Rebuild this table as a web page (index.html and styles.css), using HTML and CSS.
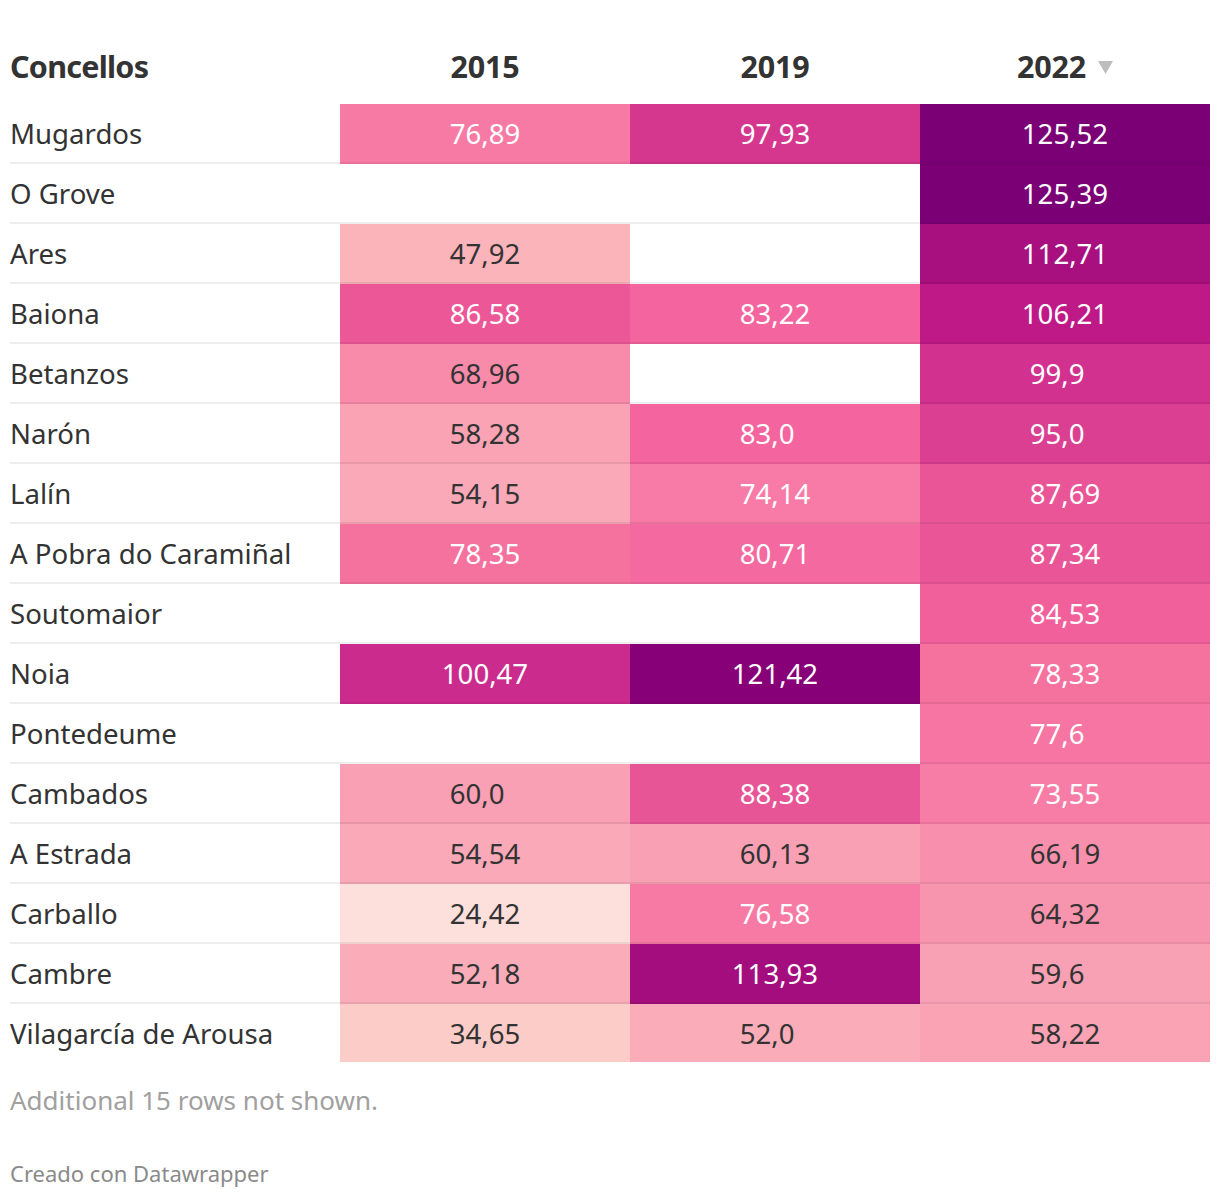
FILE: index.html
```html
<!DOCTYPE html>
<html lang="gl">
<head>
<meta charset="utf-8">
<title>Concellos</title>
<link rel="stylesheet" href="styles.css">
</head>
<body>
<div class="chart">
  <div class="table">
    <div class="th th-name">Concellos</div>
    <div class="th">2015</div>
    <div class="th">2019</div>
    <div class="th th-sorted">2022 <svg class="sort" width="15" height="13" viewBox="0 0 15 13"><polygon points="0,0 15,0 7.5,13" fill="#bdbdbd"/></svg></div>

    <div class="td name">Mugardos</div>
    <div class="td num light" style="background:#f77aa5">76,89</div>
    <div class="td num light" style="background:#d5378f">97,93</div>
    <div class="td num light" style="background:#7b0075">125,52</div>

    <div class="td name">O Grove</div>
    <div class="td num"></div>
    <div class="td num"></div>
    <div class="td num light" style="background:#7b0075">125,39</div>

    <div class="td name">Ares</div>
    <div class="td num" style="background:#fcb4bb">47,92</div>
    <div class="td num"></div>
    <div class="td num light" style="background:#a8107f">112,71</div>

    <div class="td name">Baiona</div>
    <div class="td num light" style="background:#ec5897">86,58</div>
    <div class="td num light" style="background:#f4649e">83,22</div>
    <div class="td num light" style="background:#bf1987">106,21</div>

    <div class="td name">Betanzos</div>
    <div class="td num" style="background:#f88aaa">68,96</div>
    <div class="td num"></div>
    <div class="td num light" style="background:#d2318f">99,9<span class="pad">0</span></div>

    <div class="td name">Narón</div>
    <div class="td num" style="background:#f9a3b5">58,28</div>
    <div class="td num light" style="background:#f4649e">83,0<span class="pad">0</span></div>
    <div class="td num light" style="background:#da3f92">95,0<span class="pad">0</span></div>

    <div class="td name">Lalín</div>
    <div class="td num" style="background:#faa9b8">54,15</div>
    <div class="td num light" style="background:#f77ba6">74,14</div>
    <div class="td num light" style="background:#e95597">87,69</div>

    <div class="td name">A Pobra do Caramiñal</div>
    <div class="td num light" style="background:#f5729f">78,35</div>
    <div class="td num light" style="background:#f4699f">80,71</div>
    <div class="td num light" style="background:#e95597">87,34</div>

    <div class="td name">Soutomaior</div>
    <div class="td num"></div>
    <div class="td num"></div>
    <div class="td num light" style="background:#f2609c">84,53</div>

    <div class="td name">Noia</div>
    <div class="td num light" style="background:#cc2b8e">100,47</div>
    <div class="td num light" style="background:#880077">121,42</div>
    <div class="td num light" style="background:#f5729f">78,33</div>

    <div class="td name">Pontedeume</div>
    <div class="td num"></div>
    <div class="td num"></div>
    <div class="td num light" style="background:#f675a2">77,6<span class="pad">0</span></div>

    <div class="td name">Cambados</div>
    <div class="td num" style="background:#f9a0b4">60,0<span class="pad">0</span></div>
    <div class="td num light" style="background:#e85597">88,38</div>
    <div class="td num light" style="background:#f77da7">73,55</div>

    <div class="td name">A Estrada</div>
    <div class="td num" style="background:#faa9b8">54,54</div>
    <div class="td num" style="background:#f9a0b4">60,13</div>
    <div class="td num" style="background:#f890ad">66,19</div>

    <div class="td name">Carballo</div>
    <div class="td num" style="background:#fde0dc">24,42</div>
    <div class="td num light" style="background:#f77aa5">76,58</div>
    <div class="td num" style="background:#f895ae">64,32</div>

    <div class="td name">Cambre</div>
    <div class="td num" style="background:#faadb9">52,18</div>
    <div class="td num light" style="background:#a30d7e">113,93</div>
    <div class="td num" style="background:#f9a1b4">59,6<span class="pad">0</span></div>

    <div class="td name last">Vilagarcía de Arousa</div>
    <div class="td num last" style="background:#fccdc8">34,65</div>
    <div class="td num last" style="background:#faadb9">52,0<span class="pad">0</span></div>
    <div class="td num last" style="background:#f9a3b5">58,22</div>
  </div>
  <p class="note">Additional 15 rows not shown.</p>
  <p class="credit">Creado con Datawrapper</p>
</div>
</body>
</html>
```
FILE: styles.css
```css
html, body {
  margin: 0;
  padding: 0;
  background: #fff;
}
body {
  font-family: "Noto Sans", "Open Sans", sans-serif;
  color: #333;
}
.chart {
  padding: 0 10px;
}
.table {
  display: grid;
  grid-template-columns: 330px 290px 290px 290px;
}
.th {
  height: 104px;
  box-sizing: border-box;
  padding-top: 28px;
  display: flex;
  align-items: center;
  justify-content: center;
  font-weight: 700;
  font-size: 30.5px;
  letter-spacing: -0.2px;
  color: #333;
}
.th-name {
  justify-content: flex-start;
  letter-spacing: -0.75px;
}
.th-sorted {
  gap: 12px;
}
.sort {
  margin-top: 3px;
}
.td {
  height: 60px;
  box-sizing: border-box;
  border-bottom: 2px solid rgba(0, 0, 0, 0.065);
  display: flex;
  align-items: center;
  font-size: 27.6px;
}
.td.last {
  border-bottom: none;
  height: 58px;
}
.name {
  justify-content: flex-start;
}
.num {
  justify-content: center;
  font-variant-numeric: tabular-nums;
  color: #333;
}
.num.light {
  color: #fff;
}
.pad {
  visibility: hidden;
}
.note {
  margin: 20px 0 0;
  font-size: 26px;
  line-height: 36px;
  color: #a0a0a0;
}
.credit {
  margin: 40px 0 0;
  font-size: 22px;
  line-height: 30px;
  color: #8a8a8a;
}
```
